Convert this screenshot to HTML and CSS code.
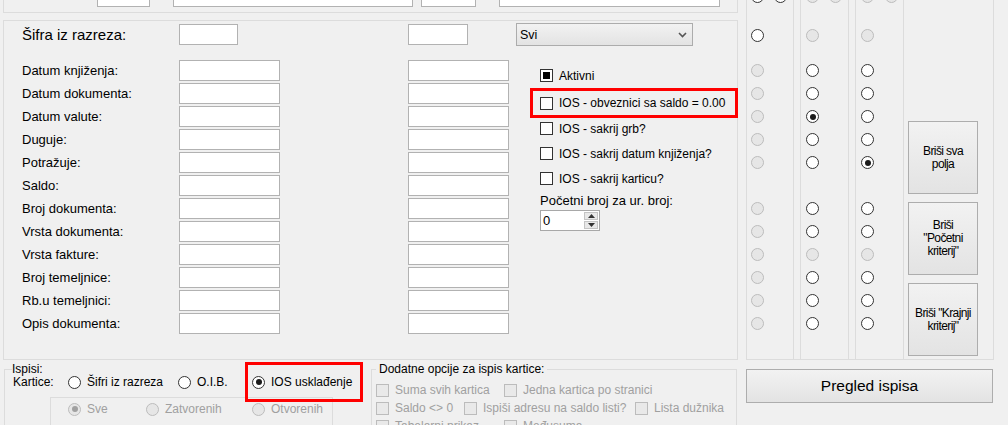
FILE: index.html
```html
<!DOCTYPE html>
<html>
<head>
<meta charset="utf-8">
<link rel="stylesheet" href="styles.css">
</head>
<body>
<div class="screen">
  <div class="left">
    <div class="topbox">
      <div class="tb t1"></div>
      <div class="tb t2"></div>
      <div class="tb t3"></div>
      <div class="tb t4"></div>
    </div>
    <div class="mainbox">
      <div class="sifra-row">
        <div class="lbl big">Šifra iz razreza:</div>
        <div class="tb sw1"></div>
        <div class="tb sw2"></div>
        <div class="sel"><span>Svi</span><svg width="9" height="6" viewBox="0 0 9 6"><polyline points="1,1 4.5,4.5 8,1" fill="none" stroke="#555" stroke-width="1.6"/></svg></div>
      </div>
      <div class="body">
        <div class="fields">
          <div class="lbl">Datum knjiženja:</div><div class="tb"></div><div class="tb"></div>
          <div class="lbl">Datum dokumenta:</div><div class="tb"></div><div class="tb"></div>
          <div class="lbl">Datum valute:</div><div class="tb"></div><div class="tb"></div>
          <div class="lbl">Duguje:</div><div class="tb"></div><div class="tb"></div>
          <div class="lbl">Potražuje:</div><div class="tb"></div><div class="tb"></div>
          <div class="lbl">Saldo:</div><div class="tb"></div><div class="tb"></div>
          <div class="lbl">Broj dokumenta:</div><div class="tb"></div><div class="tb"></div>
          <div class="lbl">Vrsta dokumenta:</div><div class="tb"></div><div class="tb"></div>
          <div class="lbl">Vrsta fakture:</div><div class="tb"></div><div class="tb"></div>
          <div class="lbl">Broj temeljnice:</div><div class="tb"></div><div class="tb"></div>
          <div class="lbl">Rb.u temeljnici:</div><div class="tb"></div><div class="tb"></div>
          <div class="lbl">Opis dokumenta:</div><div class="tb"></div><div class="tb"></div>
        </div>
        <div class="checks">
          <div class="ck-item"><span class="cb ind"></span><span>Aktivni</span></div>
          <div class="ck-item hl"><span class="cb"></span><span>IOS - obveznici sa saldo = 0.00</span></div>
          <div class="ck-item up"><span class="cb"></span><span>IOS - sakrij grb?</span></div>
          <div class="ck-item"><span class="cb"></span><span>IOS - sakrij datum knjiženja?</span></div>
          <div class="ck-item"><span class="cb"></span><span>IOS - sakrij karticu?</span></div>
          <div class="poc">Početni broj za ur. broj:</div>
          <div class="spin">
            <span class="val">0</span>
            <span class="btns">
              <span class="sb"><svg width="7" height="4" viewBox="0 0 7 4"><polygon points="3.5,0 7,4 0,4" fill="#333"/></svg></span>
              <span class="sb"><svg width="7" height="4" viewBox="0 0 7 4"><polygon points="0,0 7,0 3.5,4" fill="#333"/></svg></span>
            </span>
          </div>
        </div>
      </div>
    </div>
    <div class="bottom">
      <div class="ispisi">
        <div class="ihead"><span class="corner"></span><span>Ispisi:</span></div>
        <div class="ibody">
          <div class="krow">
            <span class="klbl">Kartice:</span>
            <span class="ri w110"><span class="radio"></span><span>Šifri iz razreza</span></span>
            <span class="ri w67"><span class="radio"></span><span>O.I.B.</span></span>
            <span class="hl2"><span class="ri"><span class="radio on"></span><span>IOS usklađenje</span></span></span>
          </div>
          <div class="dbox">
            <span class="ri w78 dis"><span class="radio dis on"></span><span>Sve</span></span>
            <span class="ri w106 dis"><span class="radio dis"></span><span>Zatvorenih</span></span>
            <span class="ri dis"><span class="radio dis"></span><span>Otvorenih</span></span>
          </div>
        </div>
      </div>
      <fieldset class="dod">
        <legend>Dodatne opcije za ispis kartice:</legend>
        <div class="drow first">
          <span class="di w128"><span class="cb dis"></span><span>Suma svih kartica</span></span>
          <span class="di"><span class="cb dis"></span><span>Jedna kartica po stranici</span></span>
        </div>
        <div class="drow">
          <span class="di w88"><span class="cb dis"></span><span>Saldo &lt;&gt; 0</span></span>
          <span class="di w171"><span class="cb dis"></span><span>Ispiši adresu na saldo listi?</span></span>
          <span class="di"><span class="cb dis"></span><span>Lista dužnika</span></span>
        </div>
        <div class="drow">
          <span class="di w128"><span class="cb dis"></span><span>Tabelarni prikaz</span></span>
          <span class="di"><span class="cb dis"></span><span>Međusuma</span></span>
        </div>
      </fieldset>
    </div>
  </div>
  <div class="right">
    <div class="rpanel">
      <div class="rcol ca">
        <div class="rc first"><span class="radio"></span><span class="radio"></span></div>
        <div class="rc sif"><span class="radio"></span></div>
        <div class="rc k0"><span class="radio dis"></span></div>
        <div class="rc"><span class="radio dis"></span></div>
        <div class="rc"><span class="radio dis"></span></div>
        <div class="rc"><span class="radio dis"></span></div>
        <div class="rc"><span class="radio dis"></span></div>
        <div class="rc"></div>
        <div class="rc"><span class="radio dis"></span></div>
        <div class="rc"><span class="radio dis"></span></div>
        <div class="rc"><span class="radio dis"></span></div>
        <div class="rc"><span class="radio dis"></span></div>
        <div class="rc"><span class="radio dis"></span></div>
        <div class="rc"><span class="radio dis"></span></div>
      </div>
      <div class="rcol cbb">
        <div class="rc first"><span class="radio dis"></span><span class="radio dis"></span></div>
        <div class="rc sif"><span class="radio dis"></span></div>
        <div class="rc k0"><span class="radio"></span></div>
        <div class="rc"><span class="radio"></span></div>
        <div class="rc"><span class="radio on"></span></div>
        <div class="rc"><span class="radio"></span></div>
        <div class="rc"><span class="radio"></span></div>
        <div class="rc"></div>
        <div class="rc"><span class="radio"></span></div>
        <div class="rc"><span class="radio"></span></div>
        <div class="rc"><span class="radio dis"></span></div>
        <div class="rc"><span class="radio"></span></div>
        <div class="rc"><span class="radio"></span></div>
        <div class="rc"><span class="radio"></span></div>
      </div>
      <div class="rcol cc">
        <div class="rc first wide"><span class="radio dis"></span><span class="radio dis"></span></div>
        <div class="rc sif"><span class="radio dis"></span></div>
        <div class="rc k0"><span class="radio"></span></div>
        <div class="rc"><span class="radio"></span></div>
        <div class="rc"><span class="radio"></span></div>
        <div class="rc"><span class="radio"></span></div>
        <div class="rc"><span class="radio on"></span></div>
        <div class="rc"></div>
        <div class="rc"><span class="radio"></span></div>
        <div class="rc"><span class="radio"></span></div>
        <div class="rc"><span class="radio dis"></span></div>
        <div class="rc"><span class="radio"></span></div>
        <div class="rc"><span class="radio"></span></div>
        <div class="rc"><span class="radio"></span></div>
      </div>
      <div class="cd">
        <div class="bb">Briši sva<br>polja</div>
        <div class="bb">Briši<br>"Početni<br>kriterij"</div>
        <div class="bb">Briši "Krajnji<br>kriterij"</div>
      </div>
    </div>
    <div class="pregled">Pregled ispisa</div>
  </div>
</div>
</body>
</html>
```
FILE: styles.css
```css
* { box-sizing: border-box; }
html, body { margin: 0; padding: 0; background: #f0f0f0; overflow: hidden; }
body { font-family: "Liberation Sans", Arial, sans-serif; font-size: 12px; color: #000; }

.screen { display: flex; width: 1008px; height: 425px; overflow: hidden; }
.left { width: 740px; flex: none; display: flex; flex-direction: column; }

.tb { background: #fff; border: 1px solid #b2b2b2; height: 21px; flex: none; }

.topbox { margin-left: 3px; width: 735px; height: 13px; flex: none; border: 1px solid #dcdcdc; border-top: 0; display: flex; align-items: flex-end; padding-bottom: 5px; }
.t1 { margin-left: 93px; width: 53px; }
.t2 { margin-left: 23px; width: 240px; }
.t3 { margin-left: 8px; width: 55px; }
.t4 { margin-left: 23px; width: 221px; }

.mainbox { margin: 7px 0 0 3px; width: 735px; height: 340px; border: 1px solid #dcdcdc; flex: none; }
.sifra-row { display: flex; align-items: center; height: 23px; margin-top: 2px; }
.lbl { padding-left: 18px; font-size: 13px; white-space: nowrap; }
.sifra-row .lbl { width: 175px; }
.lbl.big { font-size: 15px; }
.sw1 { width: 59px; }
.sw2 { margin-left: 170px; width: 60px; }
.sel { margin-left: 48px; width: 177px; height: 23px; border: 1px solid #acacac; background: linear-gradient(#f2f2f2, #e3e3e3); display: flex; align-items: center; justify-content: space-between; padding: 0 5px 0 3px; font-size: 12.5px; }

.body { display: flex; margin-top: 14px; }
.fields { display: grid; grid-template-columns: 175px 229px 101px; grid-auto-rows: 21px; row-gap: 2px; align-items: center; }
.fields .tb { width: 101px; }

.checks { margin-left: 31px; padding-top: 3px; display: flex; flex-direction: column; }
.ck-item { display: flex; align-items: center; gap: 6px; height: 25px; white-space: nowrap; }
.ck-item.hl { border: 3px solid #f00; margin-left: -10px; padding-left: 7px; height: 30px; width: 208px; }
.ck-item.up { margin-top: -2px; }
.poc { height: 19px; line-height: 19px; font-size: 13px; white-space: nowrap; }

.cb { width: 13px; height: 13px; border: 1px solid #333; background: #fff; flex: none; display: flex; align-items: center; justify-content: center; }
.cb.ind::after { content: ""; width: 7px; height: 7px; background: #000; }
.cb.dis { border-color: #bcbcbc; background: #e9e9e9; }

.spin { width: 60px; height: 21px; border: 1px solid #a8a8a8; background: #fff; display: flex; }
.spin .val { flex: 1; padding-left: 2px; line-height: 19px; font-size: 13px; }
.spin .btns { width: 14px; display: flex; flex-direction: column; margin: 1px 1px 1px 0; gap: 1px; }
.spin .sb { flex: 1; background: #e8e8e8; border: 1px solid #c4c4c4; display: flex; align-items: center; justify-content: center; }

.radio { width: 13px; height: 13px; border-radius: 50%; border: 1px solid #333; background: #fff; flex: none; display: flex; align-items: center; justify-content: center; }
.radio.dis { border-color: #bcbcbc; background: #e6e6e6; }
.radio.on::after { content: ""; width: 6px; height: 6px; border-radius: 50%; background: #1a1a1a; }
.radio.dis.on::after { background: #a0a0a0; }

/* bottom */
.bottom { display: flex; margin-top: 2px; }
.ispisi { margin-left: 4px; width: 362px; flex: none; }
.ihead { display: flex; height: 14px; align-items: center; }
.corner { width: 8px; height: 7px; border-left: 1px solid #dcdcdc; border-top: 1px solid #dcdcdc; align-self: flex-end; }
.ibody { border-left: 1px solid #dcdcdc; height: 100px; }
.krow { display: flex; align-items: center; height: 14px; margin-top: -1px; }
.klbl { width: 63px; padding-left: 8px; flex: none; }
.ri { display: flex; align-items: center; gap: 6px; flex: none; white-space: nowrap; }
.ri.dis { color: #a0a0a0; }
.w110 { width: 110px; }
.w67 { width: 67px; }
.w78 { width: 78px; }
.w106 { width: 106px; }
.hl2 { border: 3px solid #f00; height: 40px; width: 118px; padding-left: 4px; display: flex; align-items: center; flex: none; }
.dbox { margin: 8px 0 0 45px; width: 283px; height: 40px; border: 1px solid #dcdcdc; border-bottom: 0; display: flex; align-items: flex-start; padding: 4px 0 0 17px; }

.dod { margin: 0 0 0 5px; width: 366px; min-width: 0; height: 100px; border: 1px solid #dcdcdc; padding: 0 0 0 4px; flex: none; }
.dod legend { padding: 0 3px; line-height: 15px; font-size: 12px; }
.drow { display: flex; height: 18px; align-items: center; }
.drow.first { margin-top: 4px; }
.di { display: flex; align-items: center; gap: 6px; flex: none; white-space: nowrap; color: #a0a0a0; }
.w128 { width: 128px; }
.w88 { width: 88px; }
.w171 { width: 171px; }

/* right */
.right { margin-left: 6px; width: 248px; flex: none; display: flex; flex-direction: column; }
.rpanel { height: 360px; border-bottom: 1px solid #dcdcdc; display: flex; flex: none; }
.rcol { border-left: 1px solid #dcdcdc; border-right: 1px solid #dcdcdc; display: flex; flex-direction: column; height: 100%; }
.ca { width: 48px; padding-left: 4px; }
.cbb { width: 49px; margin-left: 6px; padding-left: 5px; }
.cc { width: 49px; margin-left: 6px; padding-left: 5px; }
.rc { height: 23px; display: flex; gap: 10px; padding-top: 4px; flex: none; }
.rc.wide { gap: 11px; }
.rc.first { margin-top: -14px; }
.rc.sif { margin-top: 16px; }
.rc.k0 { margin-top: 12px; }
.cd { width: 90px; border-right: 1px solid #dcdcdc; padding: 121px 0 0 4px; display: flex; flex-direction: column; gap: 8px; }
.bb { width: 70px; height: 73px; border: 1px solid #adadad; background: linear-gradient(#f2f2f2, #e3e3e3); font-size: 12px; line-height: 13px; letter-spacing: -0.6px; display: flex; align-items: center; justify-content: center; text-align: center; flex: none; }
.pregled { margin-top: 9px; width: 247px; height: 34px; border: 1px solid #adadad; background: linear-gradient(#f2f2f2, #e3e3e3); font-size: 15.5px; display: flex; align-items: center; justify-content: center; flex: none; }
```
